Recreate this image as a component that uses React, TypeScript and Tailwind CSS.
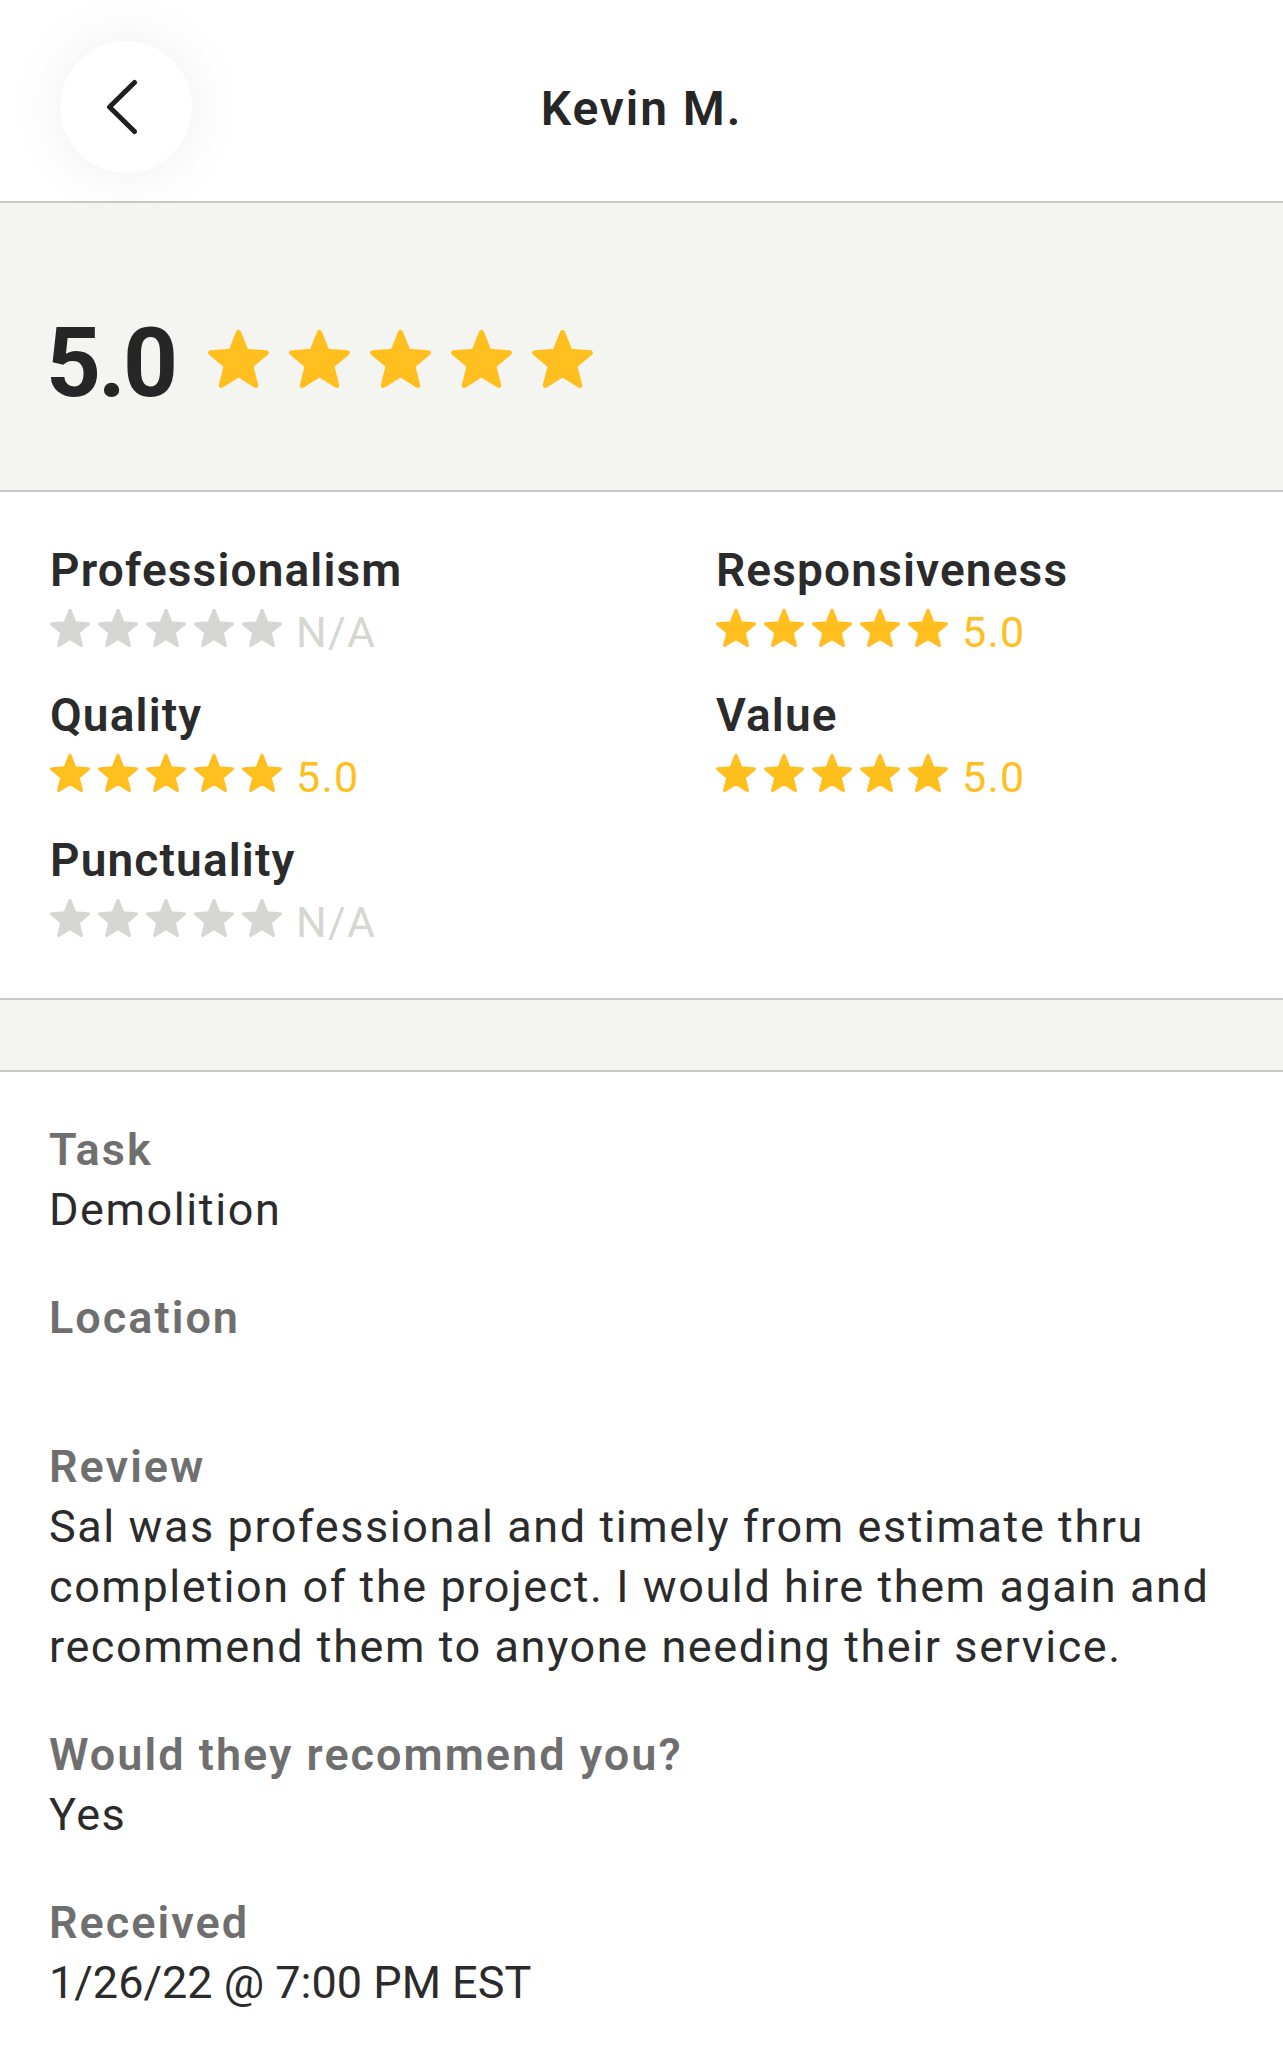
import React from "react";

const STAR_POINTS =
  "50,4 61.9,33.63 93.75,35.79 69.25,56.25 77.04,87.21 50,70.24 22.96,87.21 30.75,56.25 6.25,35.79 38.1,33.63";

const Star = ({ filled, big }: { filled: boolean; big?: boolean }) => (
  <svg
    viewBox="2.25 0 95.5 91.2"
    className={big ? "w-[61px] h-[58px] shrink-0" : "w-[40px] h-[38px] shrink-0"}
  >
    <polygon
      points={STAR_POINTS}
      fill={filled ? "#FFBF1F" : "#D6D6D2"}
      stroke={filled ? "#FFBF1F" : "#D6D6D2"}
      strokeWidth={8}
      strokeLinejoin="round"
    />
  </svg>
);

const ratings = [
  { label: "Professionalism", value: null },
  { label: "Responsiveness", value: "5.0" },
  { label: "Quality", value: "5.0" },
  { label: "Value", value: "5.0" },
  { label: "Punctuality", value: null },
];

const details = [
  { label: "Task", value: ["Demolition"] },
  { label: "Location", value: [] },
  {
    label: "Review",
    value: [
      "Sal was professional and timely from estimate thru completion of the project. I would hire them again and recommend them to anyone needing their service.",
    ],
  },
  { label: "Would they recommend you?", value: ["Yes"] },
  { label: "Received", value: ["1/26/22 @ 7:00 PM EST"] },
];

export default function App() {
  return (
    <div
      className="w-[1283px] min-h-[2058px] bg-white text-[#2b2b2b]"
      style={{ fontFamily: "Roboto, 'Liberation Sans', sans-serif" }}
    >
      {/* Header */}
      <div className="grid grid-cols-[1fr_auto_1fr] items-center h-[203px] border-b-2 border-[#c9c9c6]">
        <div>
          <button className="ml-[60px] mt-[13px] w-[132px] h-[132px] rounded-full bg-white shadow-[0_0_60px_rgba(0,0,0,0.07)] flex items-center justify-center pr-[8px]">
            <svg width="32" height="56" viewBox="0 0 32 56" fill="none">
              <path
                d="M28.5 3.5 L3.5 28 L28.5 52.5"
                stroke="#1f1f1f"
                strokeWidth="5"
                strokeLinecap="round"
                strokeLinejoin="round"
              />
            </svg>
          </button>
        </div>
        <h1 className="pt-[16px] text-[48px] leading-none font-semibold tracking-[0.04em] text-[#262626]">
          Kevin M.
        </h1>
        <div />
      </div>

      {/* Overall rating */}
      <div className="h-[289px] bg-[#f4f4f0] border-b-2 border-[#c9c9c6] pl-[46px] pt-[112px] flex items-start">
        <span className="text-[96px] leading-none font-bold tracking-[-3px] text-[#262626]">
          5.0
        </span>
        <div className="flex gap-[20px] ml-[33px] mt-[15px]">
          {[0, 1, 2, 3, 4].map((i) => (
            <Star key={i} filled big />
          ))}
        </div>
      </div>

      {/* Category ratings */}
      <div className="grid grid-cols-[666px_1fr] gap-y-[31px] pl-[50px] pt-[48px] pb-[54px] border-b-2 border-[#c9c9c6]">
        {ratings.map((r) => (
          <div key={r.label}>
            <div className="text-[46px] leading-[60px] font-semibold tracking-[0.025em] text-[#2b2b2b]">
              {r.label}
            </div>
            <div className="flex items-baseline mt-[9px]">
              <div className="flex gap-[8px]">
                {[0, 1, 2, 3, 4].map((i) => (
                  <Star key={i} filled={r.value !== null} />
                ))}
              </div>
              <span
                className={`ml-[14px] text-[43px] leading-none tracking-[0.03em] ${
                  r.value ? "text-[#FFBF1F]" : "text-[#D6D6D2]"
                }`}
              >
                {r.value ?? "N/A"}
              </span>
            </div>
          </div>
        ))}
      </div>

      {/* Spacer band */}
      <div className="h-[72px] bg-[#f4f4f0] border-b-2 border-[#c9c9c6]" />

      {/* Details */}
      <div className="flex flex-col gap-[48px] pl-[49px] pr-[50px] pt-[48px] pb-[45px]">
        {details.map((d) => (
          <div key={d.label}>
            <div className="text-[45px] leading-[60px] font-semibold tracking-[0.045em] text-[#6f6f6f]">
              {d.label}
            </div>
            {d.value.length === 0 ? (
              <div className="h-[41px]" />
            ) : (
              d.value.map((v) => (
                <div
                  key={v}
                  className={`text-[45px] leading-[60px] text-[#2b2b2b] ${
                    d.label === "Received" ? "tracking-normal" : "tracking-[0.035em]"
                  }`}
                >
                  {v}
                </div>
              ))
            )}
          </div>
        ))}
      </div>
    </div>
  );
}
